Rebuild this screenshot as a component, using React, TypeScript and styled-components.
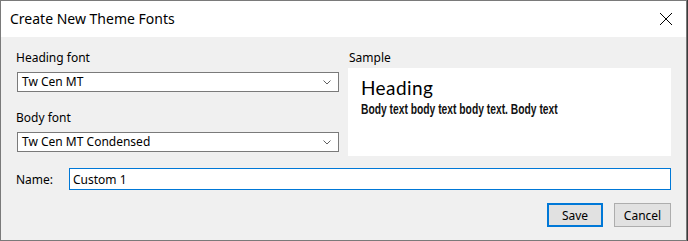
import React from "react";
import styled, { createGlobalStyle } from "styled-components";

const GlobalStyle = createGlobalStyle`
  html, body {
    margin: 0;
    padding: 0;
    background: #3b3b3b;
  }
  * {
    box-sizing: border-box;
  }
`;

const uiFont = `"Segoe UI", "Noto Sans", "Liberation Sans", sans-serif`;

const DialogWindow = styled.div`
  width: 687px;
  height: 241px;
  display: flex;
  flex-direction: column;
  background: #f0f0f0;
  border: 1px solid #7a7a7a;
  font-family: ${uiFont};
  font-size: 12px;
  color: #000;
`;

const TitleBar = styled.div`
  flex-shrink: 0;
  height: 36px;
  display: flex;
  align-items: center;
  justify-content: space-between;
  padding: 0 13px 0 9px;
  background: #fff;
`;

const TitleText = styled.span`
  font-size: 14px;
  color: #000;
  padding-bottom: 1px;
`;

const CloseButton = styled.div`
  width: 14px;
  height: 14px;
  display: flex;
  cursor: pointer;
`;

const DialogBody = styled.div`
  flex: 1;
  display: flex;
  flex-direction: column;
  padding: 13px 15px 13px 15px;
`;

const FieldsGrid = styled.div`
  display: grid;
  grid-template-columns: 323px 1fr;
  column-gap: 9px;
`;

const FieldColumn = styled.div`
  display: flex;
  flex-direction: column;
`;

const FieldLabel = styled.div<{ $gap?: number; $indent?: number }>`
  height: 16px;
  line-height: 16px;
  padding-left: ${(p) => p.$indent ?? 0}px;
  margin-bottom: ${(p) => p.$gap ?? 6}px;
`;

const ComboBox = styled.div<{ $mb?: number }>`
  height: 20px;
  margin-left: 1px;
  display: flex;
  align-items: center;
  justify-content: space-between;
  padding: 0 7px 0 4px;
  background: #fff;
  border: 1px solid #7a7a7a;
  margin-bottom: ${(p) => p.$mb ?? 0}px;
`;

const ComboText = styled.span`
  line-height: 16px;
`;

const SampleBox = styled.div`
  height: 88px;
  background: #fff;
  padding: 9px 13px;
  display: flex;
  flex-direction: column;
`;

const SampleHeading = styled.div`
  font-family: "Lato", "Noto Sans", sans-serif;
  font-size: 19px;
  line-height: 22px;
  letter-spacing: 0.4px;
  color: #000;
`;

const SampleBody = styled.div`
  font-family: "Liberation Sans", sans-serif;
  font-weight: bold;
  font-size: 14px;
  line-height: 16px;
  margin-top: 2px;
  color: #111;
  white-space: nowrap;
  transform: scaleX(0.735);
  transform-origin: left center;
`;

const NameRow = styled.div`
  display: flex;
  align-items: center;
  margin-top: 12px;
`;

const NameLabel = styled.label`
  width: 53px;
`;

const NameInput = styled.div`
  flex: 1;
  height: 22px;
  display: flex;
  align-items: center;
  padding-left: 3px;
  background: #fff;
  border: 1px solid #0078d7;
`;

const ButtonRow = styled.div`
  display: flex;
  justify-content: flex-end;
  gap: 11px;
  margin-top: 13px;
`;

const DialogButton = styled.button<{ $primary?: boolean }>`
  width: ${(p) => (p.$primary ? 56 : 57)}px;
  height: 24px;
  padding: 0;
  font-family: ${uiFont};
  font-size: 12px;
  color: #000;
  background: #e1e1e1;
  border: ${(p) => (p.$primary ? "2px solid #0078d7" : "1px solid #adadad")};
`;

const Chevron = () => (
  <svg width="8" height="5" viewBox="0 0 8 5">
    <path d="M0.5 0.5 L4 4 L7.5 0.5" fill="none" stroke="#606060" strokeWidth="1" />
  </svg>
);

const CloseIcon = () => (
  <svg width="14" height="14" viewBox="0 0 14 14">
    <path d="M1 1 L13 13 M13 1 L1 13" stroke="#000" strokeWidth="1" />
  </svg>
);

const App = () => {
  return (
    <>
      <GlobalStyle />
      <DialogWindow>
        <TitleBar>
          <TitleText>Create New Theme Fonts</TitleText>
          <CloseButton>
            <CloseIcon />
          </CloseButton>
        </TitleBar>
        <DialogBody>
          <FieldsGrid>
            <FieldColumn>
              <FieldLabel>Heading font</FieldLabel>
              <ComboBox $mb={18}>
                <ComboText>Tw Cen MT</ComboText>
                <Chevron />
              </ComboBox>
              <FieldLabel>Body font</FieldLabel>
              <ComboBox>
                <ComboText>Tw Cen MT Condensed</ComboText>
                <Chevron />
              </ComboBox>
            </FieldColumn>
            <FieldColumn>
              <FieldLabel $gap={2} $indent={1}>
                Sample
              </FieldLabel>
              <SampleBox>
                <SampleHeading>Heading</SampleHeading>
                <SampleBody>Body text body text body text. Body text</SampleBody>
              </SampleBox>
            </FieldColumn>
          </FieldsGrid>
          <NameRow>
            <NameLabel>Name:</NameLabel>
            <NameInput>Custom 1</NameInput>
          </NameRow>
          <ButtonRow>
            <DialogButton $primary>Save</DialogButton>
            <DialogButton>Cancel</DialogButton>
          </ButtonRow>
        </DialogBody>
      </DialogWindow>
    </>
  );
};

export default App;
